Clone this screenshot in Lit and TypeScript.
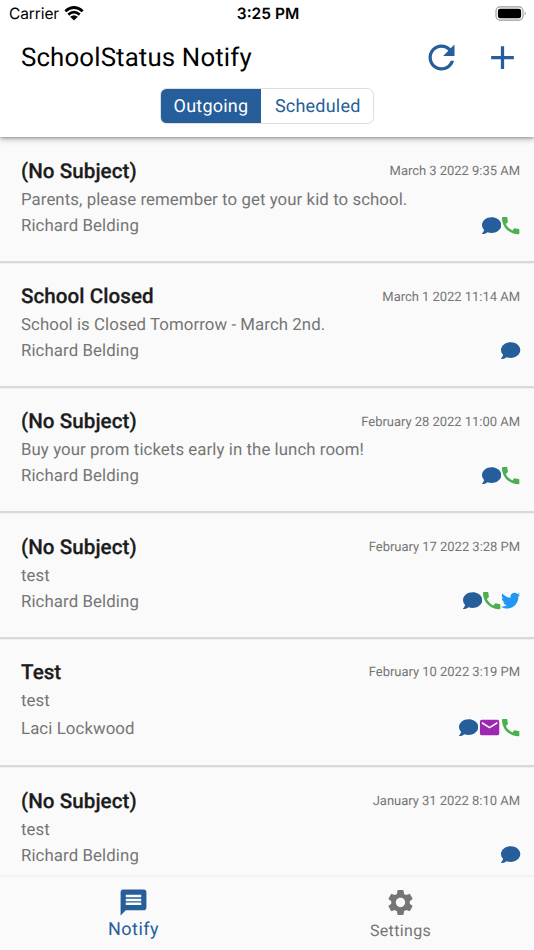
import { LitElement, html, svg, css, TemplateResult } from "lit";
import { customElement, property } from "lit/decorators.js";

type Channel = "chat" | "call" | "mail" | "tweet";

interface Message {
  subject: string;
  date: string;
  body: string;
  sender: string;
  channels: Channel[];
}

const messages: Message[] = [
  { subject: "(No Subject)", date: "March 3 2022 9:35 AM", body: "Parents, please remember to get your kid to school.", sender: "Richard Belding", channels: ["chat", "call"] },
  { subject: "School Closed", date: "March 1 2022 11:14 AM", body: "School is Closed Tomorrow - March 2nd.", sender: "Richard Belding", channels: ["chat"] },
  { subject: "(No Subject)", date: "February 28 2022 11:00 AM", body: "Buy your prom tickets early in the lunch room!", sender: "Richard Belding", channels: ["chat", "call"] },
  { subject: "(No Subject)", date: "February 17 2022 3:28 PM", body: "test", sender: "Richard Belding", channels: ["chat", "call", "tweet"] },
  { subject: "Test", date: "February 10 2022 3:19 PM", body: "test", sender: "Laci Lockwood", channels: ["chat", "mail", "call"] },
  { subject: "(No Subject)", date: "January 31 2022 8:10 AM", body: "test", sender: "Richard Belding", channels: ["chat"] },
];

const shapes: Record<Channel, { box: string; path: string }> = {
  chat: { box: "0 0 512 512", path: "M256 32C114.6 32 0 125.1 0 240c0 49.6 21.4 95 57 130.7C44.5 421.1 2.7 466 2.2 466.5c-2.2 2.3-2.8 5.7-1.5 8.700S4.800 480 8 480c66.300 0 116-31.800 140.600-51.400 32.700 12.300 69 19.400 107.400 19.400 141.400 0 256-93.100 256-208S397.400 32 256 32z" },
  call: { box: "2 2 20 20", path: "M20.010 15.380c-1.230 0-2.420-.200-3.530-.560-.350-.120-.740-.030-1.010.240l-1.570 1.970c-2.830-1.350-5.480-3.900-6.890-6.830l1.950-1.660c.270-.280.350-.670.240-1.020-.370-1.110-.560-2.300-.560-3.530 0-.540-.450-.990-.990-.990H4.190C3.650 3 3 3.240 3 3.990 3 13.280 10.730 21 20.010 21c.710 0 .990-.630.990-1.180v-3.450c0-.540-.450-.990-.990-.990z" },
  mail: { box: "0 0 24 24", path: "M20 4H4c-1.100 0-1.990.900-1.990 2L2 18c0 1.100.900 2 2 2h16c1.100 0 2-.900 2-2V6c0-1.100-.900-2-2-2zm0 4l-8 5-8-5V6l8 5 8-5v2z" },
  tweet: { box: "0 0 512 512", path: "M459.370 151.716c.325 4.548.325 9.097.325 13.645 0 138.720-105.583 298.558-298.558 298.558-59.452 0-114.680-17.219-161.137-47.106 8.447.974 16.568 1.299 25.340 1.299 49.055 0 94.213-16.568 130.274-44.832-46.132-.975-84.792-31.188-98.112-72.772 6.498.974 12.995 1.624 19.818 1.624 9.421 0 18.843-1.300 27.614-3.573-48.081-9.747-84.143-51.980-84.143-102.985v-1.299c13.969 7.797 30.214 12.670 47.431 13.319-28.264-18.843-46.781-51.005-46.781-87.391 0-19.492 5.197-37.360 14.294-52.954 51.655 63.675 129.300 105.258 216.365 109.807-1.624-7.797-2.599-15.918-2.599-24.040 0-57.828 46.782-104.934 104.934-104.934 30.213 0 57.502 12.670 76.670 33.137 23.715-4.548 46.456-13.320 66.599-25.340-7.798 24.366-24.366 44.833-46.132 57.827 21.117-2.273 41.584-8.122 60.426-16.243-14.292 20.791-33.161 39.308-54.628 54.904z" },
};

@customElement("message-row")
export class MessageRow extends LitElement {
  @property({ attribute: false }) message!: Message;

  static styles = css`
    :host { display: block; box-sizing: border-box; padding: 19.200px 13px 23px 21px; border-bottom: 2px solid #d9d9d9; box-shadow: 0 1px 0 #efefef; color: #757575; }
    .line { display: flex; justify-content: space-between; align-items: center; white-space: nowrap; }
    .top { height: 30px; }
    .subject { color: #1c1c1c; font-size: 20.600px; font-weight: 500; letter-spacing: 0.050px; -webkit-text-stroke: 0.250px #1c1c1c; }
    .date { font-size: 13px; letter-spacing: -0.030px; margin-right: 1px; }
    .body { height: 27px; line-height: 27px; font-size: 16.800px; letter-spacing: 0.080px; white-space: nowrap; }
    .bottom { height: 24px; font-size: 16.800px; letter-spacing: 0.100px; }
    .tall { height: 27.600px; }
    .icons { display: flex; align-items: center; margin: -1.600px .4px 0 0; }
    svg { display: block; width: 19.300px; height: 19.300px; flex: none; }
    .chat { fill: #255e9a; }
    .call { fill: #4caf50; }
    .mail { fill: #9c27b0; width: 23.200px; height: 23.200px; }
    .tweet { fill: #2196f3; }
  `;

  render() {
    const m = this.message;
    return html`
      <div class="line top"><span class="subject">${m.subject}</span><span class="date">${m.date}</span></div>
      <div class="body">${m.body}</div>
      <div class="line bottom ${m.channels.includes("mail") ? "tall" : ""}">
        <span>${m.sender}</span>
        <span class="icons">${m.channels.map((c) => html`<svg class=${c} viewBox=${shapes[c].box}><path d=${shapes[c].path}></path></svg>`)}</span>
      </div>`;
  }
}

const icon = (name: string, box: string, content: TemplateResult | unknown) =>
  html`<svg class=${name} viewBox=${box}>${content}</svg>`;

@customElement("app-root")
export class AppRoot extends LitElement {
  static styles = css`
    :host { display: flex; flex-direction: column; width: 534px; height: 950px; overflow: hidden; background: #fafafa; font-family: Roboto, sans-serif; text-rendering: geometricPrecision; }
    svg { display: block; flex: none; }
    header { flex: none; height: 137px; background: #fff; position: relative; z-index: 1; box-shadow: 0 2px 6px rgba(0,0,0,.3), 0 1px 2px rgba(0,0,0,.2); }
    .status { display: grid; grid-template-columns: 1fr auto 1fr; align-items: center; height: 27px; padding: 0 7px 0 9px; font-family: Inter, sans-serif; font-size: 15.500px; color: #000; }
    .carrier { display: flex; align-items: center; gap: 5px; letter-spacing: -.1px; line-height: 20px; padding-top: 1px; }
    .time { font-weight: 600; letter-spacing: 0; line-height: 20px; padding-top: 1px; }
    .wifi { width: 20px; height: 15px; margin-top: -1px; }
    .battery { width: 32px; height: 15px; justify-self: end; }
    .bar { display: flex; align-items: center; height: 60px; padding: 0 19px 0 21px; }
    .bar h1 { flex: 1; margin: 0; font-size: 25.800px; font-weight: 400; letter-spacing: 0.150px; color: #000; padding-top: 2px; }
    .refresh, .plus { fill: #255e9a; width: 39px; height: 39px; }
    .refresh { margin-right: 22.500px; }
    .bar .plus { margin-right: -7px; }
    .tabs { display: flex; box-sizing: border-box; width: 214.500px; height: 35.500px; margin: 1px auto 0; border: 1px solid #dedede; border-radius: 6.500px; overflow: hidden; font-size: 18px; letter-spacing: 0.220px; color: #255e9a; }
    .tab { flex: 1; display: flex; align-items: center; justify-content: center; padding-top: 2px; padding-left: 1px; }
    .tab.on { flex: 0 0 100.500px; box-sizing: border-box; padding-left: 0; background: #255e9a; color: #fff; }
    main { flex: 1; min-height: 0; overflow: hidden; padding-top: .8px; }
    nav { flex: none; display: flex; height: 73px; border-top: 1px solid #f0f0f0; background: #fafafa; box-shadow: 0 -1px 1px rgba(0,0,0,.02); position: relative; }
    .item { flex: 1; display: flex; flex-direction: column; align-items: center; color: #757575; fill: #757575; font-size: 16px; letter-spacing: .35px; padding-top: 10px; }
    .item svg { width: 31px; height: 31px; }
    .item span { line-height: 25px; }
    .on { color: #255e9a; fill: #255e9a; }
    .item.on { font-size: 18px; }
    .item.on span { line-height: 24px; letter-spacing: .45px; }
  `;

  render() {
    return html`
      <header>
        <div class="status">
          <span class="carrier">Carrier ${icon("wifi", "0 0 20 15", svg`<path d="M1.300 5.300Q10-2.300 18.700 5.300M4.300 8.600Q10 3.800 15.700 8.600" fill="none" stroke="#000" stroke-width="2.700"></path><path d="M6.200 10.800Q10 7.800 13.800 10.800L10 14.600Z"></path>`)}</span>
          <span class="time">3:25 PM</span>
          ${icon("battery", "0 0 32 15", svg`<rect x="1" y=".9" width="27" height="13.200" rx="4" fill="none" stroke="#999" stroke-width="1.100"></rect><rect x="2.900" y="2.800" width="23.200" height="9.400" rx="2.200"></rect><path d="M29.700 5.200Q31.700 7.500 29.700 9.800Z" fill="#999"></path>`)}
        </div>
        <div class="bar">
          <h1>SchoolStatus Notify</h1>
          ${icon("refresh", "0 0 24 24", svg`<path d="M17.650 6.350C16.200 4.900 14.210 4 12 4c-4.420 0-7.990 3.580-7.990 8s3.570 8 7.990 8c3.730 0 6.840-2.550 7.730-6h-2.080c-.820 2.330-3.040 4-5.650 4-3.310 0-6-2.690-6-6s2.690-6 6-6c1.660 0 3.140.690 4.220 1.780L13 11h7V4l-2.350 2.350z"></path>`)}
          ${icon("plus", "0 0 24 24", svg`<path d="M19 13h-6v6h-2v-6H5v-2h6V5h2v6h6v2z"></path>`)}
        </div>
        <div class="tabs"><div class="tab on">Outgoing</div><div class="tab">Scheduled</div></div>
      </header>
      <main>${messages.map((m) => html`<message-row .message=${m}></message-row>`)}</main>
      <nav>
        <div class="item on">${icon("notify", "0 0 24 24", svg`<path d="M20 2H4c-1.100 0-1.990.900-1.990 2L2 22l4-4h14c1.100 0 2-.900 2-2V4c0-1.100-.900-2-2-2zM6 6h12v2H6zm0 3h12v2H6zm0 3h12v2H6z" fill-rule="evenodd"></path>`)}<span>Notify</span></div>
        <div class="item">${icon("settings", "0 0 24 24", svg`<path d="M19.140 12.940c.040-.300.060-.610.060-.940 0-.320-.020-.640-.070-.940l2.030-1.580c.180-.140.230-.410.120-.610l-1.920-3.320c-.120-.220-.370-.290-.590-.220l-2.390.960c-.500-.380-1.030-.700-1.620-.940l-.360-2.540c-.040-.240-.240-.410-.480-.410h-3.840c-.240 0-.430.170-.470.410l-.360 2.540c-.590.240-1.130.570-1.620.940l-2.390-.960c-.220-.080-.470 0-.590.220L2.740 8.870c-.120.210-.080.470.120.610l2.030 1.580c-.050.300-.090.630-.090.940s.020.640.070.940l-2.030 1.580c-.180.140-.230.410-.120.610l1.920 3.320c.120.220.370.290.590.220l2.390-.960c.500.380 1.030.700 1.620.940l.360 2.540c.050.240.240.410.480.410h3.840c.240 0 .440-.170.470-.410l.360-2.540c.590-.240 1.130-.560 1.620-.940l2.390.960c.220.080.470 0 .590-.220l1.920-3.320c.120-.220.070-.470-.120-.610l-2.010-1.580zM12 15.600c-1.980 0-3.600-1.620-3.600-3.600s1.620-3.600 3.600-3.600 3.600 1.620 3.600 3.600-1.620 3.600-3.600 3.600z"></path>`)}<span>Settings</span></div>
      </nav>`;
  }
}
